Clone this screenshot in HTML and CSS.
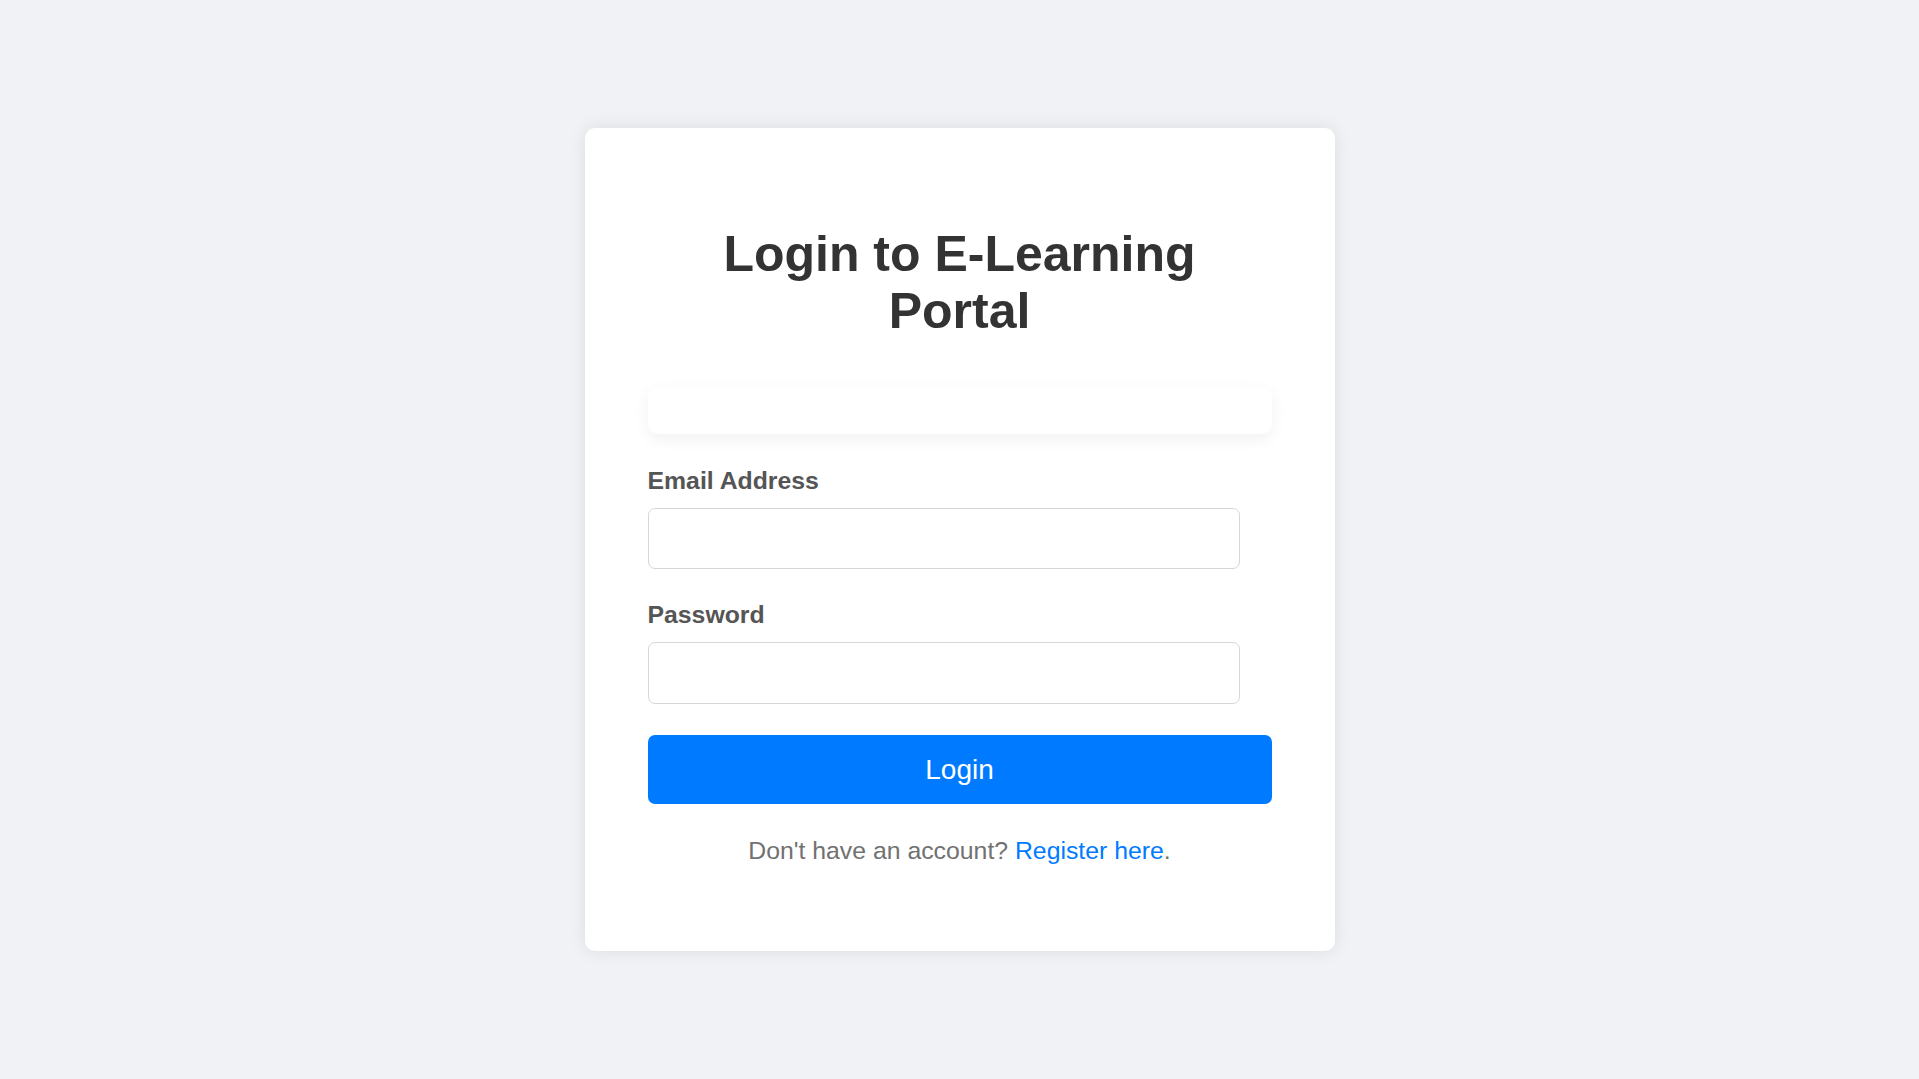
FILE: index.html
```html
<!DOCTYPE html>
<html lang="en">
<head>
<meta charset="UTF-8">
<title>Login - E-Learning Portal</title>
<link rel="stylesheet" href="styles.css">
</head>
<body>
  <main class="card">
    <h1 class="title">Login to E-Learning Portal</h1>
    <div class="message"></div>
    <form class="form">
      <label class="label" for="email">Email Address</label>
      <input class="input" type="email" id="email">
      <label class="label" for="password">Password</label>
      <input class="input" type="password" id="password">
      <button class="btn" type="button">Login</button>
    </form>
    <p class="footer">Don't have an account? <a class="link" href="#">Register here</a>.</p>
  </main>
</body>
</html>
```

FILE: styles.css
```css
* { box-sizing: border-box; }

html, body {
  margin: 0;
  padding: 0;
}

body {
  min-height: 100vh;
  background: #f0f2f5;
  font-family: "Liberation Sans", Arial, sans-serif;
  display: flex;
  align-items: center;
  justify-content: center;
}

.card {
  width: 750px;
  background: #ffffff;
  border-radius: 10px;
  box-shadow: 0 0 18px rgba(0, 0, 0, 0.09);
  padding: 63px 63px 60.5px;
}

.title {
  margin: 34.5px 0 47.2px;
  font-size: 50px;
  line-height: 57px;
  font-weight: 700;
  color: #333333;
  text-align: center;
}

.message {
  height: 47.3px;
  border-radius: 10px;
  background: #ffffff;
  box-shadow: 0 5px 16px rgba(0, 0, 0, 0.06);
  margin-bottom: 32.6px;
}

.form {
  display: flex;
  flex-direction: column;
  align-items: flex-start;
}

.label {
  display: block;
  font-size: 24.8px;
  line-height: 28.5px;
  font-weight: 700;
  color: #555555;
  margin-bottom: 12.6px;
}

.input {
  display: block;
  width: 95%;
  height: 61.6px;
  border: 1px solid #d6d6d6;
  border-radius: 7px;
  background: #ffffff;
  margin: 0 0 31.7px;
  padding: 0 15px;
  font-family: inherit;
  font-size: 24.8px;
}

.btn {
  display: block;
  width: 100%;
  height: 68.3px;
  border: none;
  border-radius: 7px;
  background: #007bff;
  color: #ffffff;
  font-family: inherit;
  font-size: 28px;
  cursor: pointer;
}

.footer {
  margin: 33.3px 0 24.8px;
  text-align: center;
  font-size: 24.8px;
  line-height: 28.5px;
  color: #717171;
}

.link {
  color: #007bff;
  text-decoration: none;
}
```
